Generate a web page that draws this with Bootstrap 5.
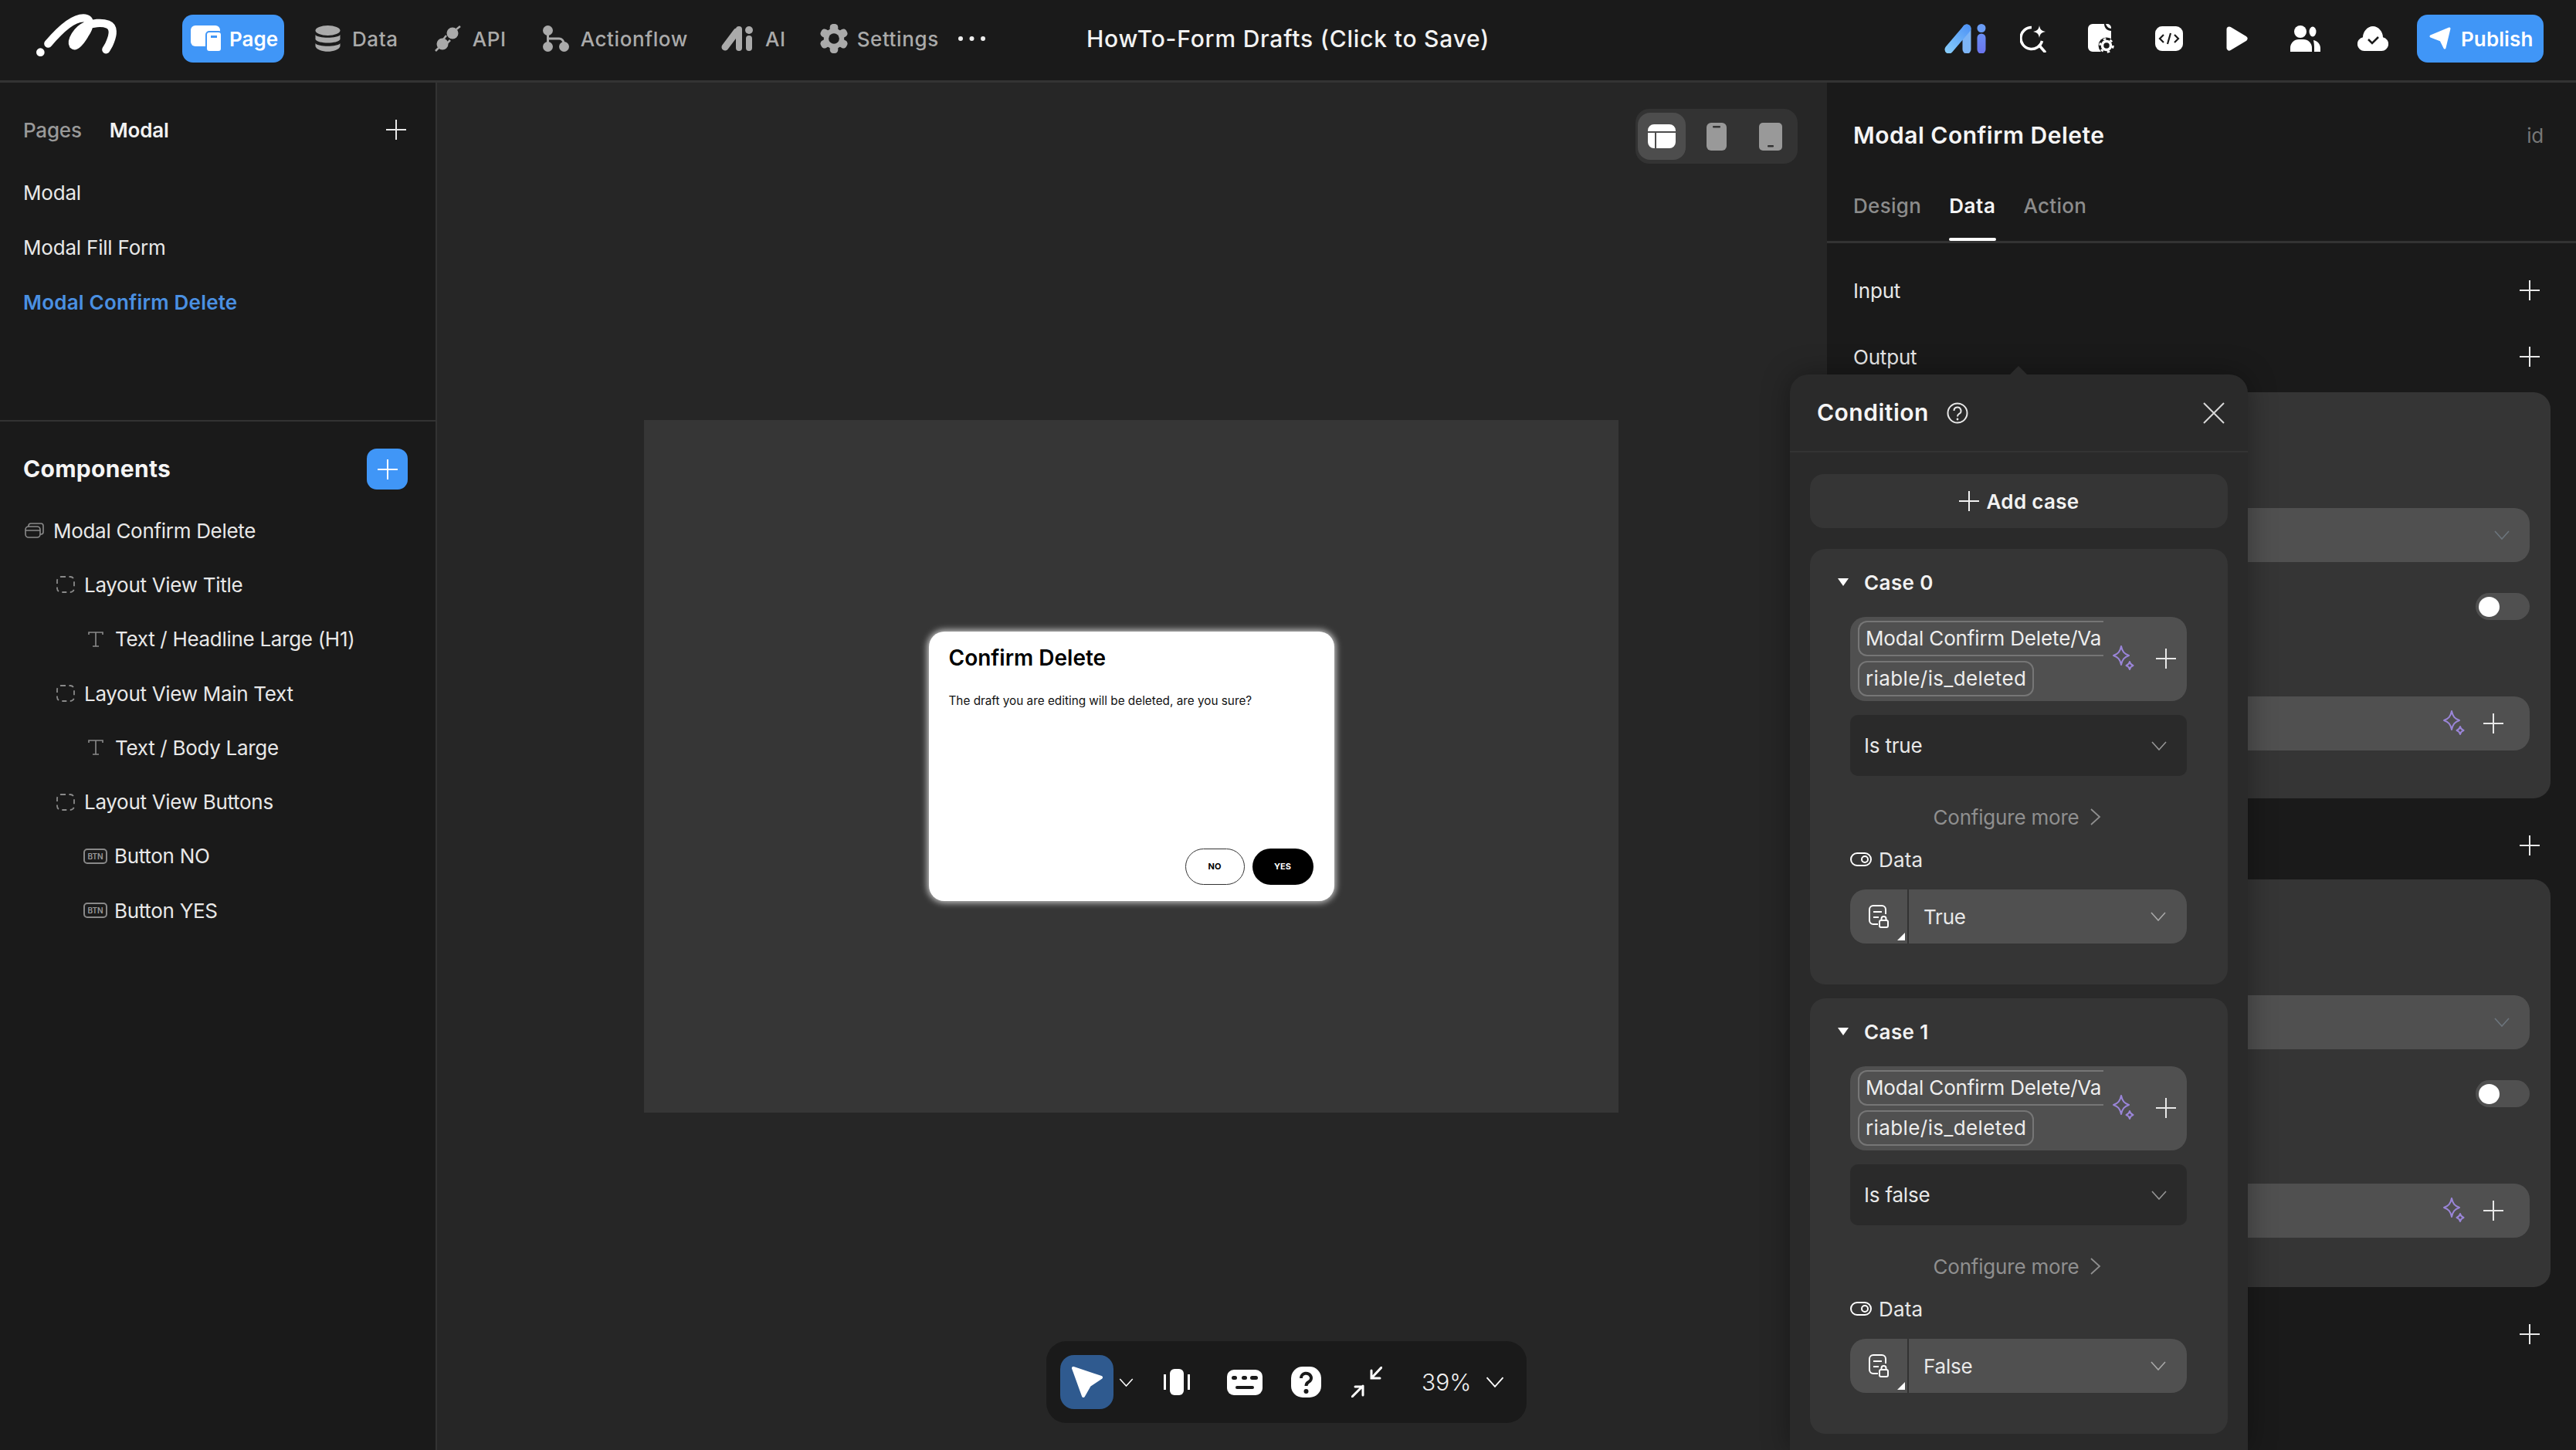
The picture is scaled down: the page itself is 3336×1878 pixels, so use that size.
<!DOCTYPE html>
<html lang="en">
<head>
  <meta charset="UTF-8">
  <meta name="viewport" content="width=device-width, initial-scale=1.0">
  <title>HowTo-Form Drafts</title>
  <link href="https://cdn.jsdelivr.net/npm/bootstrap@5.3.0/dist/css/bootstrap.min.css" rel="stylesheet">
  <style>
    html, body { height: 100%; }
    body { background: #1a1a1a; color: #e8e8e8; font-family: Inter, "Noto Sans", sans-serif; font-size: 26px; overflow: hidden; letter-spacing: -.2px; }
    a { color: inherit; text-decoration: none; }
    svg { display: block; flex: none; }
    .app-shell { width: 3336px; height: 1878px; }

    /* top bar */
    .top-bar { height: 107px; border-bottom: 3px solid #333; background: #1a1a1a; flex: none; padding-bottom: 4px; }
    .top-side { flex: 1 1 0; }
    .logo-box { margin-left: 43px; margin-right: 73px; }
    .tool-link { color: #aaa; font-weight: 500; font-size: 26px; letter-spacing: .6px; gap: 15px; margin-right: 47px; }
    .tool-link.is-on { background: #4096f7; color: #fff; width: 132px; height: 62px; border-radius: 14px; padding-left: 11px; gap: 10px; margin-right: 40px; font-weight: 600; letter-spacing: 0; }
    .tool-link.is-tight { margin-right: 43px; }
    .tool-link.is-last { margin-right: 24px; gap: 11px; }
    .doc-title { font-size: 30px; font-weight: 500; color: #f2f2f2; letter-spacing: .8px; }
    .top-slot { width: 88px; }
    .publish-btn { background: #4096f7; color: #fff; border: 0; width: 164px; height: 62px; border-radius: 14px; font-size: 26px; font-weight: 600; gap: 13px; margin-left: 13px; margin-right: 42px; padding: 0 0 0 16px; letter-spacing: .1px; }
    .publish-btn:hover { background: #4096f7; color: #fff; }

    /* left side */
    .left-side { width: 566px; flex: none; border-right: 2px solid #333; background: #1a1a1a; }
    .pages-head { height: 50px; margin-top: 36px; padding: 0 38px 0 30px; gap: 36px; }
    .dim-label { color: #999; font-weight: 500; }
    .strong-label { color: #f2f2f2; font-weight: 600; }
    .page-item { height: 71px; padding-left: 30px; }
    .page-item.is-on { color: #4a90e2; font-weight: 600; letter-spacing: .2px; }
    .page-list { margin-top: 21px; margin-bottom: 117px; }
    .comp-head { border-top: 2px solid #333; padding: 35px 36px 18px 30px; }
    .comp-title { font-size: 30px; font-weight: 700; color: #f5f5f5; letter-spacing: .3px; }
    .add-blue { width: 53px; height: 53px; background: #4096f7; border-radius: 13px; }
    .tree-item { height: 70.3px; gap: 12px; letter-spacing: -.3px; }
    .lvl-0 { padding-left: 32px; }
    .lvl-1 { padding-left: 73px; }
    .lvl-2 { padding-left: 108px; }
    .lvl-text { padding-left: 114px; gap: 15px; }
    .btn-tag { width: 31px; height: 20px; border: 2px solid #888; border-radius: 5px; font-size: 10px; line-height: 16px; text-align: center; color: #999; font-weight: 600; letter-spacing: 0; margin-right: -3px; flex: none; }

    /* canvas */
    .canvas-area { background: #262626; padding-right: 2px; }
    .device-frame { width: 1262px; height: 897px; background: #363636; }
    .modal-mock { width: 525px; height: 349px; background: #fff; border-radius: 20px; box-shadow: 0 0 9px 2px rgba(255,255,255,.75); padding: 16px 27px 21px 26px; color: #000; letter-spacing: 0; }
    .modal-head { font-size: 28px; font-weight: 600; line-height: 36px; }
    .modal-copy { font-size: 15.3px; line-height: 20px; margin-top: 28px; color: #111; }
    .modal-btns { gap: 10px; }
    .pill-no, .pill-yes { width: 77px; height: 47px; border-radius: 24px; font-size: 11px; font-weight: 700; letter-spacing: 0; }
    .pill-no { border: 1px solid #333; color: #000; }
    .pill-yes { background: #000; color: #fff; width: 79px; }
    .device-switch { position: absolute; top: 34px; right: 38px; width: 210px; height: 71px; background: #333; border-radius: 18px; padding-left: 3px; }
    .device-on { width: 62px; height: 61px; border-radius: 16px; background: #4d4d4d; }
    .device-slot-a { width: 80px; }
    .device-slot-b { width: 60px; }
    .bottom-tools { position: absolute; left: 789px; bottom: 35px; width: 622px; height: 106px; background: #1a1a1a; border-radius: 26px; padding-left: 18px; }
    .cursor-box { width: 69px; height: 70px; background: #2f5a8f; border-radius: 18px; }
    .zoom-text { font-size: 30px; font-weight: 300; color: #f0f0f0; margin-left: 51px; margin-right: 19px; letter-spacing: 0; }
    .tool-gap-s { margin-left: 7px; }
    .tool-gap-a { margin-left: 39px; }
    .tool-gap-b { margin-left: 48px; }
    .tool-gap-c { margin-left: 37px; }

    /* right side */
    .right-side { width: 972px; flex: none; padding: 0 33px 0 34px; border-left: 2px solid #333; margin-left: -2px; background: #1a1a1a; }
    .panel-title { height: 50px; margin-top: 43px; padding-right: 9px; }
    .panel-name { font-size: 30px; font-weight: 600; color: #f5f5f5; letter-spacing: .5px; }
    .panel-id { color: #777; }
    .tab-strip { margin: 49px -33px 0 -34px; padding-left: 34px; border-bottom: 3px solid #333; gap: 36px; }
    .tab-link { color: #8c8c8c; font-weight: 500; line-height: 36px; padding-bottom: 27px; letter-spacing: .3px; }
    .tab-link.is-on { color: #f5f5f5; font-weight: 600; position: relative; letter-spacing: .6px; }
    .tab-link.is-on::after { content: ""; position: absolute; left: 0; right: 0; bottom: 0; height: 4px; background: #fff; border-radius: 2px; }
    .data-line { height: 50px; padding-right: 14px; }
    .gap-a { margin-top: 36px; }
    .gap-b { margin-top: 19px; }
    .gap-c { margin-top: 21px; }
    .sec-box { background: #353535; border-radius: 22px; padding: 150px 27px 62px 27px; }
    .sec-box.is-low { padding-bottom: 64px; }
    .sec-field { height: 70px; background: #505050; border-radius: 20px; padding-right: 26px; }
    .sec-field.has-tools { padding-right: 34px; }
    .sec-toggle { width: 70px; height: 35px; background: #505050; border-radius: 18px; margin: 40px 0 99px auto; padding-left: 4px; }
    .toggle-dot { width: 27px; height: 26px; background: #fff; border-radius: 50%; }

    /* condition popup */
    .cond-pop { position: absolute; left: 2318px; top: 485px; width: 593px; bottom: 0; background: #2a2a2a; border-radius: 24px 24px 0 0; box-shadow: 0 0 36px rgba(0,0,0,.35); padding: 0 26px; }
    .cond-pop::before { content: ""; position: absolute; left: 284px; top: -11px; border: 12px solid transparent; border-top: 0; border-bottom-color: #2a2a2a; }
    .cond-head { height: 101px; margin: 0 -26px; padding: 0 30px 0 35px; border-bottom: 2px solid #333; }
    .cond-title { font-size: 30px; font-weight: 600; color: #f5f5f5; letter-spacing: .5px; }
    .cond-help { margin-left: 23px; }
    .add-case { height: 70px; margin-top: 28px; background: #353535; border-radius: 18px; gap: 10px; font-weight: 600; color: #f2f2f2; letter-spacing: .3px; }
    .case-box { background: #353535; border-radius: 20px; height: 564px; margin-top: 27px; padding: 23px 53px 0 52px; }
    .case-box + .case-box { margin-top: 18px; }
    .case-name { height: 40px; font-weight: 600; color: #f2f2f2; gap: 20px; margin-left: -16px; letter-spacing: .4px; }
    .case-arrow { width: 0; height: 0; border: 7px solid transparent; border-top: 10px solid #fff; border-bottom: 0; }
    .var-field { height: 109px; margin-top: 25px; background: #505050; border-radius: 20px; padding: 5px 14px 6px 10px; }
    .chip-stack { width: 318px; overflow: hidden; gap: 6px; }
    .var-chip { height: 46px; border: 2px solid #767676; border-radius: 12px; padding: 0 8px; white-space: nowrap; line-height: 42px; color: #ededed; width: fit-content; letter-spacing: .4px; }
    .var-chip.is-cut { border-right: 0; border-radius: 12px 0 0 12px; width: 100%; letter-spacing: -.15px; }
    .spark-gap { margin-left: 12px; }
    .cond-select { height: 79px; margin-top: 18px; background: #2a2a2a; border-radius: 10px; padding: 0 26px 0 18px; }
    .more-line { height: 40px; margin-top: 33px; color: #8f8f8f; gap: 14px; padding-right: 4px; }
    .data-label { height: 36px; margin-top: 17px; gap: 9px; letter-spacing: .2px; }
    .value-select { height: 70px; margin-top: 21px; background: #505050; border-radius: 20px; padding-right: 27px; }
    .value-icon { width: 76px; height: 70px; border-right: 2px solid #333; position: relative; flex: none; }
    .value-icon::after { content: ""; position: absolute; right: 3px; bottom: 4px; border-style: solid; border-width: 0 0 10px 10px; border-color: transparent transparent #fff transparent; }
    .value-name { margin-left: 19px; }
  </style>
</head>
<body>
  <!-- shared icons -->
  <svg width="0" height="0" class="position-absolute">
    <symbol id="i-plus" viewBox="0 0 26 26"><path d="M13 0v26M0 13h26" stroke="currentColor" stroke-width="2" fill="none"/></symbol>
    <symbol id="i-chev" viewBox="0 0 20 12"><path d="M1 1l9 10 9-10" stroke="currentColor" stroke-width="1.6" fill="none"/></symbol>
    <symbol id="i-spark" viewBox="0 0 28 34"><path d="M11 1c1.500 7 4 10 10 12-6 2-8.500 5-10 12-1.500-7-4-10-10-12 6-2 8.500-5 10-12zM22 21c.6 3 1.500 4 4.500 5-3 1-3.900 2-4.500 5-.6-3-1.500-4-4.500-5 3-1 3.900-2 4.500-5z" stroke="#9a85d8" stroke-width="2" fill="none" stroke-linejoin="round"/></symbol>
    <symbol id="i-dash" viewBox="0 0 24 22"><rect x="1" y="1" width="22" height="20" rx="5" stroke="#8a8a8a" stroke-width="1.800" stroke-dasharray="6 4.500" fill="none"/></symbol>
    <symbol id="i-type" viewBox="0 0 20 20"><path d="M1 4V1h18v3M10 1v18M6 19h8" stroke="#8a8a8a" stroke-width="1.600" fill="none"/></symbol>
    <symbol id="i-doc" viewBox="0 0 28 30"><path d="M13 25H7a5 5 0 0 1-5-5V6a5 5 0 0 1 5-5h11a5 5 0 0 1 5 5v6M7 9h11M7 16h7" stroke="#fff" stroke-width="2" fill="none"/><rect x="15" y="20" width="11" height="9" rx="2" stroke="#fff" stroke-width="2" fill="none"/><path d="M17.500 20v-2a3 3 0 0 1 6 0v2" stroke="#fff" stroke-width="2" fill="none"/></symbol>
    <symbol id="i-switch" viewBox="0 0 28 18"><rect x="1" y="1" width="26" height="16" rx="8" stroke="#fff" stroke-width="2" fill="none"/><circle cx="19" cy="9" r="4" stroke="#fff" stroke-width="2" fill="none"/></symbol>
    <symbol id="i-close" viewBox="0 0 28 28"><path d="M1 1l26 26M27 1L1 27" stroke="#d8d8d8" stroke-width="2" fill="none"/></symbol>
    <symbol id="i-next" viewBox="0 0 14 22"><path d="M1 1l11 10L1 21" stroke="#8f8f8f" stroke-width="1.800" fill="none"/></symbol>
    <linearGradient id="g-a" gradientUnits="userSpaceOnUse" x1="0" y1="38" x2="34" y2="0"><stop offset="0" stop-color="#8bd0fb"/><stop offset="1" stop-color="#4a8ff5"/></linearGradient>
    <linearGradient id="g-i" gradientUnits="userSpaceOnUse" x1="0" y1="0" x2="0" y2="38"><stop offset="0" stop-color="#6a9cf5"/><stop offset="1" stop-color="#6b74ee"/></linearGradient>
  </svg>

  <div class="app-shell d-flex flex-column position-relative">
    <!-- top bar -->
    <header class="top-bar d-flex align-items-center">
      <div class="top-side d-flex align-items-center">
        <div class="logo-box">
          <svg width="120" height="70" viewBox="40 30 360 210"><circle cx="68" cy="188" r="16" fill="#fff"/><path d="M98 155C140 105 190 55 235 55c35 0 25 35 5 65-15 25-35 50-45 40-10-15 15-60 50-75 25-10 60-15 85-5 25 10 20 40 10 65-5 15-12 25-17 33" stroke="#fff" stroke-width="31" stroke-linecap="round" stroke-linejoin="round" fill="none"/></svg>
        </div>
        <a href="#" class="tool-link is-on d-flex align-items-center">
          <svg width="40" height="34" viewBox="0 0 40 34"><rect width="38" height="27" rx="6" fill="#fff"/><rect x="20" y="8" width="20" height="26" rx="4" fill="#fff" stroke="#4096f7" stroke-width="2"/><rect x="26" y="13" width="8" height="3" fill="#4096f7"/></svg>
          Page
        </a>
        <a href="#" class="tool-link d-flex align-items-center">
          <svg width="33" height="34" viewBox="0 0 33 34"><ellipse cx="16.500" cy="6.500" rx="16" ry="6.500" fill="#aaa"/><path d="M.5 12c3 5 29 5 32 0v6c-3 6-29 6-32 0zM.5 23c3 5 29 5 32 0v4c-3 9-29 9-32 0z" fill="#aaa"/></svg>
          Data
        </a>
        <a href="#" class="tool-link d-flex align-items-center">
          <svg width="34" height="34" viewBox="0 0 34 34"><circle cx="23" cy="10" r="7.500" fill="#aaa"/><circle cx="10" cy="24" r="7.500" fill="#aaa"/><path d="M28 5l5-4M5 29l-4 4M11 18l4-5M16 23l4-4" stroke="#aaa" stroke-width="2.500" fill="none"/></svg>
          API
        </a>
        <a href="#" class="tool-link is-tight d-flex align-items-center">
          <svg width="34" height="34" viewBox="0 0 34 34"><circle cx="6.500" cy="6.500" r="6.500" fill="#aaa"/><circle cx="6.500" cy="27.500" r="6.500" fill="#aaa"/><circle cx="27.500" cy="27.500" r="6.500" fill="#aaa"/><path d="M6.500 10v14M6.500 17H21a6 6 0 0 1 6 6" stroke="#aaa" stroke-width="3" fill="none"/></svg>
          Actionflow
        </a>
        <a href="#" class="tool-link is-tight d-flex align-items-center">
          <svg width="42" height="34" viewBox="0 0 42 34"><path d="M5 28L20 8" stroke="#aaa" stroke-width="9" stroke-linecap="round"/><path d="M23 5v24" stroke="#aaa" stroke-width="8" stroke-linecap="round"/><circle cx="36" cy="6" r="5" fill="#aaa"/><path d="M36 17v12" stroke="#aaa" stroke-width="8" stroke-linecap="round"/></svg>
          AI
        </a>
        <a href="#" class="tool-link is-last d-flex align-items-center">
          <svg width="38" height="38" viewBox="0 0 36 36"><g fill="#aaa"><rect x="13" y="0" width="10" height="36" rx="4"/><rect x="13" y="0" width="10" height="36" rx="4" transform="rotate(60 18 18)"/><rect x="13" y="0" width="10" height="36" rx="4" transform="rotate(120 18 18)"/></g><circle cx="18" cy="18" r="9.500" fill="none" stroke="#aaa" stroke-width="6"/><circle cx="18" cy="18" r="6.500" fill="#1a1a1a"/></svg>
          Settings
        </a>
        <svg width="37" height="8" viewBox="0 0 37 8"><circle cx="4" cy="4" r="3" fill="#eee"/><circle cx="18.500" cy="4" r="3" fill="#eee"/><circle cx="33" cy="4" r="3" fill="#eee"/></svg>
      </div>
      <div class="doc-title">HowTo-Form Drafts (Click to Save)</div>
      <div class="top-side d-flex align-items-center justify-content-end">
        <div class="top-slot d-flex justify-content-center">
          <svg width="55" height="38" viewBox="0 0 55 38"><path d="M29 6v27" stroke="#7db4f5" stroke-width="11" stroke-linecap="round"/><path d="M6 33L29 6" stroke="url(#g-a)" stroke-width="11" stroke-linecap="round"/><circle cx="48" cy="5.500" r="5.500" fill="#6a9cf5"/><path d="M48 18v15" stroke="url(#g-i)" stroke-width="11" stroke-linecap="round"/></svg>
        </div>
        <div class="top-slot d-flex justify-content-center">
          <svg width="34" height="35" viewBox="0 0 34 35"><path d="M15 2.500A14 14 0 1 0 28.500 20" stroke="#fff" stroke-width="3.500" fill="none"/><path d="M25 26l7 8" stroke="#fff" stroke-width="3.500" stroke-linecap="round"/><path d="M25 0c1 5 2.500 7 8 8-5.500 1-7 3-8 8-1-5-2.500-7-8-8 5.500-1 7-3 8-8z" fill="#fff"/></svg>
        </div>
        <div class="top-slot d-flex justify-content-center">
          <svg width="34" height="38" viewBox="0 0 34 38"><path d="M6 0h15c0 5 4 9 9 9v27H6a6 6 0 0 1-6-6V6a6 6 0 0 1 6-6z" fill="#fff"/><path d="M23 0c1 3 4 6 7 6V5a5 5 0 0 0-5-5z" fill="#fff"/><circle cx="24" cy="28" r="10.500" fill="#1a1a1a"/><circle cx="24" cy="28" r="5.500" fill="none" stroke="#fff" stroke-width="3.500"/><circle cx="24" cy="28" r="8.500" fill="none" stroke="#fff" stroke-width="2.500" stroke-dasharray="3.500 5.400"/></svg>
        </div>
        <div class="top-slot d-flex justify-content-center">
          <svg width="36" height="32" viewBox="0 0 36 32"><rect width="36" height="32" rx="9" fill="#fff"/><path d="M11 11l-5 5 5 5M25 11l5 5-5 5M20 9l-4 14" stroke="#1a1a1a" stroke-width="2.200" fill="none"/></svg>
        </div>
        <div class="top-slot d-flex justify-content-center">
          <svg width="28" height="32" viewBox="0 0 28 32"><path d="M4 4l20 12L4 28z" fill="#fff" stroke="#fff" stroke-width="7" stroke-linejoin="round"/></svg>
        </div>
        <div class="top-slot d-flex justify-content-center">
          <svg width="39" height="34" viewBox="0 0 39 34"><circle cx="13" cy="8" r="8" fill="#fff"/><ellipse cx="29" cy="8" rx="4.500" ry="6.500" fill="#fff"/><path d="M0 34v-5a11 11 0 0 1 11-11h6a11 11 0 0 1 11 11v5z" fill="#fff"/><path d="M30 19c5 1 9 5 9 10v5h-8v-6c0-3-.5-6-1-9z" fill="#fff"/></svg>
        </div>
        <div class="top-slot d-flex justify-content-center">
          <svg width="40" height="32" viewBox="0 0 40 32"><path d="M9 32a9 9 0 0 1-2-17.800C7 7 13 0 20 0s13 7 13 14.200A9 9 0 0 1 31 32z" fill="#fff"/><path d="M14 17l5 5 8-8" stroke="#1a1a1a" stroke-width="2.500" fill="none"/></svg>
        </div>
        <button class="btn publish-btn d-flex align-items-center">
          <svg width="28" height="30" viewBox="0 0 28 30"><path d="M2 12L26 2l-6 25-5-10z" fill="#fff" stroke="#fff" stroke-width="3" stroke-linejoin="round"/></svg>
          Publish
        </button>
      </div>
    </header>

    <div class="d-flex flex-grow-1 position-relative">
      <!-- pages and components -->
      <aside class="left-side">
        <div class="pages-head d-flex align-items-center">
          <span class="dim-label">Pages</span>
          <span class="strong-label">Modal</span>
          <svg class="ms-auto" width="26" height="26"><use href="#i-plus"/></svg>
        </div>
        <div class="page-list">
          <div class="page-item d-flex align-items-center">Modal</div>
          <div class="page-item d-flex align-items-center">Modal Fill Form</div>
          <div class="page-item is-on d-flex align-items-center">Modal Confirm Delete</div>
        </div>
        <div class="comp-head d-flex align-items-center justify-content-between">
          <span class="comp-title">Components</span>
          <span class="add-blue d-flex align-items-center justify-content-center text-white"><svg width="26" height="26"><use href="#i-plus"/></svg></span>
        </div>
        <div class="tree-item lvl-0 d-flex align-items-center">
          <svg width="25" height="20" viewBox="0 0 25 20"><rect x="1" y="5" width="19" height="14" rx="4" stroke="#8a8a8a" stroke-width="1.600" fill="none"/><path d="M5 5V4a3 3 0 0 1 3-3h13a3 3 0 0 1 3 3v8a3 3 0 0 1-3 3h-1M1 10h19" stroke="#8a8a8a" stroke-width="1.600" fill="none"/></svg>
          Modal Confirm Delete
        </div>
        <div class="tree-item lvl-1 d-flex align-items-center"><svg width="24" height="22"><use href="#i-dash"/></svg>Layout View Title</div>
        <div class="tree-item lvl-text d-flex align-items-center"><svg width="20" height="20"><use href="#i-type"/></svg>Text / Headline Large (H1)</div>
        <div class="tree-item lvl-1 d-flex align-items-center"><svg width="24" height="22"><use href="#i-dash"/></svg>Layout View Main Text</div>
        <div class="tree-item lvl-text d-flex align-items-center"><svg width="20" height="20"><use href="#i-type"/></svg>Text / Body Large</div>
        <div class="tree-item lvl-1 d-flex align-items-center"><svg width="24" height="22"><use href="#i-dash"/></svg>Layout View Buttons</div>
        <div class="tree-item lvl-2 d-flex align-items-center"><span class="btn-tag">BTN</span>Button NO</div>
        <div class="tree-item lvl-2 d-flex align-items-center"><span class="btn-tag">BTN</span>Button YES</div>
      </aside>

      <!-- canvas -->
      <main class="canvas-area flex-grow-1 position-relative d-flex align-items-center justify-content-center">
        <div class="device-frame d-flex align-items-center justify-content-center">
          <div class="modal-mock d-flex flex-column">
            <div class="modal-head">Confirm Delete</div>
            <div class="modal-copy">The draft you are editing will be deleted, are you sure?</div>
            <div class="modal-btns d-flex justify-content-end mt-auto">
              <span class="pill-no d-flex align-items-center justify-content-center">NO</span>
              <span class="pill-yes d-flex align-items-center justify-content-center">YES</span>
            </div>
          </div>
        </div>

        <div class="device-switch d-flex align-items-center">
          <span class="device-on d-flex align-items-center justify-content-center">
            <svg width="36" height="31" viewBox="0 0 36 31"><path d="M8 0h20a8 8 0 0 1 8 8v1H0V8a8 8 0 0 1 8-8zM0 11h9v20H8a8 8 0 0 1-8-8zM11 11h25v12a8 8 0 0 1-8 8H11z" fill="#fff"/></svg>
          </span>
          <span class="device-slot-a d-flex justify-content-center">
            <svg width="26" height="36" viewBox="0 0 26 36"><rect width="26" height="36" rx="6" fill="#999"/><rect x="8" y="4" width="10" height="2.500" rx="1" fill="#333"/></svg>
          </span>
          <span class="device-slot-b d-flex justify-content-center">
            <svg width="30" height="36" viewBox="0 0 30 36"><rect width="30" height="36" rx="5" fill="#999"/><rect x="11" y="29" width="8" height="2.500" rx="1" fill="#333"/></svg>
          </span>
        </div>

        <div class="bottom-tools d-flex align-items-center">
          <span class="cursor-box d-flex align-items-center justify-content-center">
            <svg width="44" height="44" viewBox="0 0 44 44"><path d="M4 4l36 12-15 10-8 14z" fill="#fff" stroke="#fff" stroke-width="4" stroke-linejoin="round"/></svg>
          </span>
          <svg class="text-white tool-gap-s" width="19" height="11"><use href="#i-chev"/></svg>
          <svg class="tool-gap-a" width="34" height="34" viewBox="0 0 34 34"><rect x="8" width="18" height="34" rx="6" fill="#fff"/><path d="M1.500 7v20M32.500 7v20" stroke="#fff" stroke-width="3"/></svg>
          <svg class="tool-gap-b" width="46" height="33" viewBox="0 0 46 33"><rect width="46" height="33" rx="9" fill="#fff"/><rect x="6" y="8" width="7" height="5" rx="2.500" fill="#1a1a1a"/><rect x="19" y="8" width="7" height="5" rx="2.500" fill="#1a1a1a"/><rect x="30" y="8" width="10" height="5" rx="2.500" fill="#1a1a1a"/><rect x="11" y="21" width="24" height="4" rx="2" fill="#1a1a1a"/></svg>
          <svg class="tool-gap-c" width="39" height="40" viewBox="0 0 39 40"><rect width="39" height="40" rx="15" fill="#fff"/><path d="M13 15a6.500 6 0 1 1 9.500 5c-2 1.200-3 2.500-3 5" stroke="#1a1a1a" stroke-width="4" fill="none"/><circle cx="19.500" cy="32" r="3" fill="#1a1a1a"/></svg>
          <svg class="tool-gap-a" width="40" height="40" viewBox="0 0 40 40"><path d="M39 1L26 15M26 5v10h11M1 39l14-14M5 26h10v11" stroke="#fff" stroke-width="3" fill="none" stroke-linecap="round"/></svg>
          <span class="zoom-text">39%</span>
          <svg class="text-white" width="24" height="14"><use href="#i-chev"/></svg>
        </div>
      </main>

      <!-- settings panel -->
      <aside class="right-side">
        <div class="panel-title d-flex align-items-center justify-content-between">
          <span class="panel-name">Modal Confirm Delete</span>
          <span class="panel-id">id</span>
        </div>
        <div class="tab-strip d-flex">
          <a href="#" class="tab-link">Design</a>
          <a href="#" class="tab-link is-on">Data</a>
          <a href="#" class="tab-link">Action</a>
        </div>
        <div class="data-line gap-a d-flex align-items-center justify-content-between">Input <svg width="26" height="26"><use href="#i-plus"/></svg></div>
        <div class="data-line gap-a d-flex align-items-center justify-content-between">Output <svg width="26" height="26"><use href="#i-plus"/></svg></div>
        <div class="sec-box gap-c">
          <div class="sec-field d-flex align-items-center justify-content-end text-secondary"><svg width="20" height="12"><use href="#i-chev"/></svg></div>
          <div class="sec-toggle d-flex align-items-center"><span class="toggle-dot"></span></div>
          <div class="sec-field has-tools d-flex align-items-center justify-content-end gap-4"><svg width="28" height="34"><use href="#i-spark"/></svg><svg width="26" height="26"><use href="#i-plus"/></svg></div>
        </div>
        <div class="data-line gap-a d-flex align-items-center justify-content-end"><svg width="26" height="26"><use href="#i-plus"/></svg></div>
        <div class="sec-box is-low gap-b">
          <div class="sec-field d-flex align-items-center justify-content-end text-secondary"><svg width="20" height="12"><use href="#i-chev"/></svg></div>
          <div class="sec-toggle d-flex align-items-center"><span class="toggle-dot"></span></div>
          <div class="sec-field has-tools d-flex align-items-center justify-content-end gap-4"><svg width="28" height="34"><use href="#i-spark"/></svg><svg width="26" height="26"><use href="#i-plus"/></svg></div>
        </div>
        <div class="data-line gap-a d-flex align-items-center justify-content-end"><svg width="26" height="26"><use href="#i-plus"/></svg></div>
      </aside>
    </div>

    <!-- condition popup over the panel -->
    <section class="cond-pop">
      <div class="cond-head d-flex align-items-center">
        <span class="cond-title">Condition</span>
        <svg class="cond-help" width="28" height="28" viewBox="0 0 28 28"><circle cx="14" cy="14" r="12.500" stroke="#e8e8e8" stroke-width="2" fill="none"/><path d="M9.500 11a4.500 4.500 0 1 1 6.500 4c-1.300.8-2 1.600-2 3.500" stroke="#e8e8e8" stroke-width="2" fill="none"/><circle cx="14" cy="22" r="1.400" fill="#e8e8e8"/></svg>
        <svg class="ms-auto" width="28" height="28"><use href="#i-close"/></svg>
      </div>
      <div class="add-case d-flex align-items-center justify-content-center"><svg width="26" height="26"><use href="#i-plus"/></svg>Add case</div>

      <div class="case-box">
        <div class="case-name d-flex align-items-center"><span class="case-arrow"></span>Case 0</div>
        <div class="var-field d-flex align-items-center">
          <div class="chip-stack d-flex flex-column">
            <div class="var-chip is-cut">Modal Confirm Delete/Va</div>
            <div class="var-chip">riable/is_deleted</div>
          </div>
          <svg class="spark-gap" width="28" height="34"><use href="#i-spark"/></svg>
          <svg class="ms-auto" width="26" height="26"><use href="#i-plus"/></svg>
        </div>
        <div class="cond-select d-flex align-items-center justify-content-between">Is true <svg class="text-white-50" width="20" height="12"><use href="#i-chev"/></svg></div>
        <div class="more-line d-flex align-items-center justify-content-center">Configure more <svg width="14" height="22"><use href="#i-next"/></svg></div>
        <div class="data-label d-flex align-items-center"><svg width="28" height="18"><use href="#i-switch"/></svg>Data</div>
        <div class="value-select d-flex align-items-center">
          <span class="value-icon d-flex align-items-center justify-content-center"><svg width="28" height="30"><use href="#i-doc"/></svg></span>
          <span class="value-name">True</span>
          <svg class="ms-auto text-white-50" width="20" height="12"><use href="#i-chev"/></svg>
        </div>
      </div>

      <div class="case-box">
        <div class="case-name d-flex align-items-center"><span class="case-arrow"></span>Case 1</div>
        <div class="var-field d-flex align-items-center">
          <div class="chip-stack d-flex flex-column">
            <div class="var-chip is-cut">Modal Confirm Delete/Va</div>
            <div class="var-chip">riable/is_deleted</div>
          </div>
          <svg class="spark-gap" width="28" height="34"><use href="#i-spark"/></svg>
          <svg class="ms-auto" width="26" height="26"><use href="#i-plus"/></svg>
        </div>
        <div class="cond-select d-flex align-items-center justify-content-between">Is false <svg class="text-white-50" width="20" height="12"><use href="#i-chev"/></svg></div>
        <div class="more-line d-flex align-items-center justify-content-center">Configure more <svg width="14" height="22"><use href="#i-next"/></svg></div>
        <div class="data-label d-flex align-items-center"><svg width="28" height="18"><use href="#i-switch"/></svg>Data</div>
        <div class="value-select d-flex align-items-center">
          <span class="value-icon d-flex align-items-center justify-content-center"><svg width="28" height="30"><use href="#i-doc"/></svg></span>
          <span class="value-name">False</span>
          <svg class="ms-auto text-white-50" width="20" height="12"><use href="#i-chev"/></svg>
        </div>
      </div>
    </section>
  </div>

  <script src="https://cdn.jsdelivr.net/npm/bootstrap@5.3.0/dist/js/bootstrap.bundle.min.js"></script>
</body>
</html>
